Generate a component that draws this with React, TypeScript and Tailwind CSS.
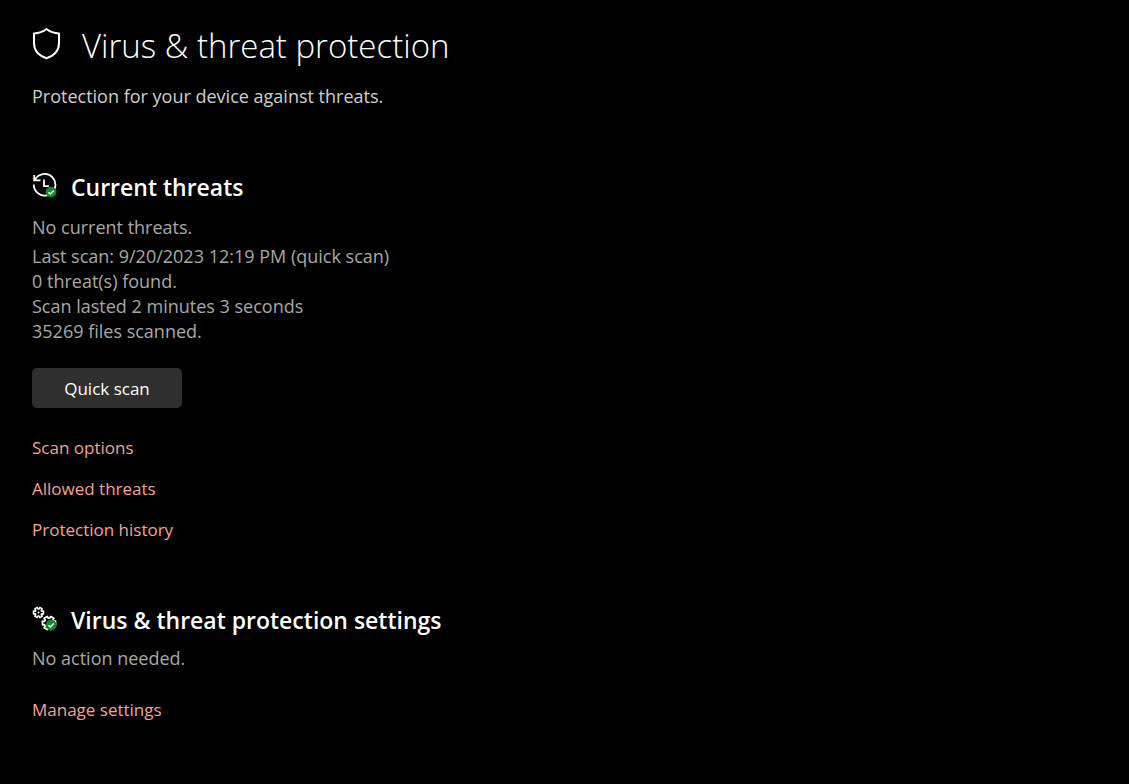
import React from "react";

interface SectionProps {
  icon: React.ReactNode;
  title: string;
  children: React.ReactNode;
}

const ShieldIcon = () => (
  <svg
    width={30}
    height={38}
    viewBox="0 0 30 38"
    fill="none"
    stroke="currentColor"
    strokeWidth={2}
    strokeLinejoin="round"
    className="shrink-0"
    aria-hidden="true"
  >
    <path d="M14.5 2C11.2 4.6 6.8 6.2 2 6.4V16C2 23.5 6.5 28.6 14.5 31.2C22.5 28.6 27 23.5 27 16V6.4C22.2 6.2 17.8 4.6 14.5 2Z" />
  </svg>
);

const CheckBadge = () => (
  <>
    <circle cx="19" cy="19" r="5.4" fill="#128a2a" stroke="none" />
    <path d="M16.4 19.2L18.3 21L21.7 17.4" stroke="#fff" strokeWidth={1.5} />
  </>
);

const HistoryIcon = () => (
  <svg
    width={26}
    height={28}
    viewBox="0 0 26 28"
    fill="none"
    stroke="currentColor"
    strokeWidth={1.8}
    className="shrink-0"
    aria-hidden="true"
  >
    <path d="M2.8 7.2A10.8 10.8 0 1 1 1.8 11.5" />
    <path d="M2.2 2V7.4H8.5" />
    <path d="M12 6.5V13.2H16.8" />
    <CheckBadge />
  </svg>
);

// outline of a cog centred on 0,0
function gearPath(outer: number, inner: number) {
  const teeth = 6;
  const points: string[] = [];
  for (let i = 0; i < teeth; i++) {
    const base = (i * 2 * Math.PI) / teeth;
    [
      [-0.36, inner],
      [-0.28, outer],
      [0.28, outer],
      [0.36, inner],
    ].forEach(([offset, radius]) => {
      const x = radius * Math.cos(base + offset);
      const y = radius * Math.sin(base + offset);
      points.push(`${x.toFixed(2)} ${y.toFixed(2)}`);
    });
  }
  return `M${points.join("L")}Z`;
}

const GearsIcon = () => (
  <svg
    width={26}
    height={28}
    viewBox="0 0 26 28"
    fill="none"
    stroke="currentColor"
    strokeWidth={1.5}
    strokeLinejoin="round"
    className="shrink-0"
    aria-hidden="true"
  >
    <path d={gearPath(5.2, 3.5)} transform="translate(6.5 6.5)" />
    <circle cx="6.5" cy="6.5" r="1" fill="currentColor" stroke="none" />
    <path d={gearPath(6.8, 4.8)} transform="translate(17 17)" strokeWidth={1.7} />
    <CheckBadge />
  </svg>
);

const TextLink = ({ children }: { children: string }) => (
  <a
    href="#"
    className="self-start text-[17px] leading-[25px] text-[#f4a38f] hover:underline"
  >
    {children}
  </a>
);

const Section = ({ icon, title, children }: SectionProps) => (
  <section className="flex flex-col">
    <div className="flex items-center gap-[13px]">
      {icon}
      <h2 className="text-[23px] leading-[34px] font-semibold">{title}</h2>
    </div>
    {children}
  </section>
);

const App = () => {
  return (
    <main className="min-h-screen bg-black px-8 pt-[22px] pb-12 font-['Open_Sans','Noto_Sans',sans-serif] text-[18px] leading-[25px] text-white">
      <header className="mb-[61px]">
        <div className="flex items-center gap-5">
          <ShieldIcon />
          <h1 className="text-[33px] leading-[48px] font-light">
            Virus &amp; threat protection
          </h1>
        </div>
        <p className="mt-[14px] text-[#cfcfcf]">
          Protection for your device against threats.
        </p>
      </header>

      <Section icon={<HistoryIcon />} title="Current threats">
        <div className="mt-[11px] text-[#a8a8a8]">
          <p>No current threats.</p>
          <div className="mt-1">
            <p>Last scan: 9/20/2023 12:19 PM (quick scan)</p>
            <p>0 threat(s) found.</p>
            <p>Scan lasted 2 minutes 3 seconds</p>
            <p>35269 files scanned.</p>
          </div>
        </div>
        <button
          type="button"
          className="mt-6 h-10 w-[150px] rounded-[5px] bg-[#2f2f2f] text-[17px] text-white"
        >
          Quick scan
        </button>
        <nav className="mt-[27px] flex flex-col gap-4">
          <TextLink>Scan options</TextLink>
          <TextLink>Allowed threats</TextLink>
          <TextLink>Protection history</TextLink>
        </nav>
      </Section>

      <div className="mt-[61px]">
        <Section icon={<GearsIcon />} title="Virus &amp; threat protection settings">
          <p className="mt-[9px] text-[#a8a8a8]">No action needed.</p>
          <nav className="mt-[26px] flex flex-col">
            <TextLink>Manage settings</TextLink>
          </nav>
        </Section>
      </div>
    </main>
  );
};

export default App;
